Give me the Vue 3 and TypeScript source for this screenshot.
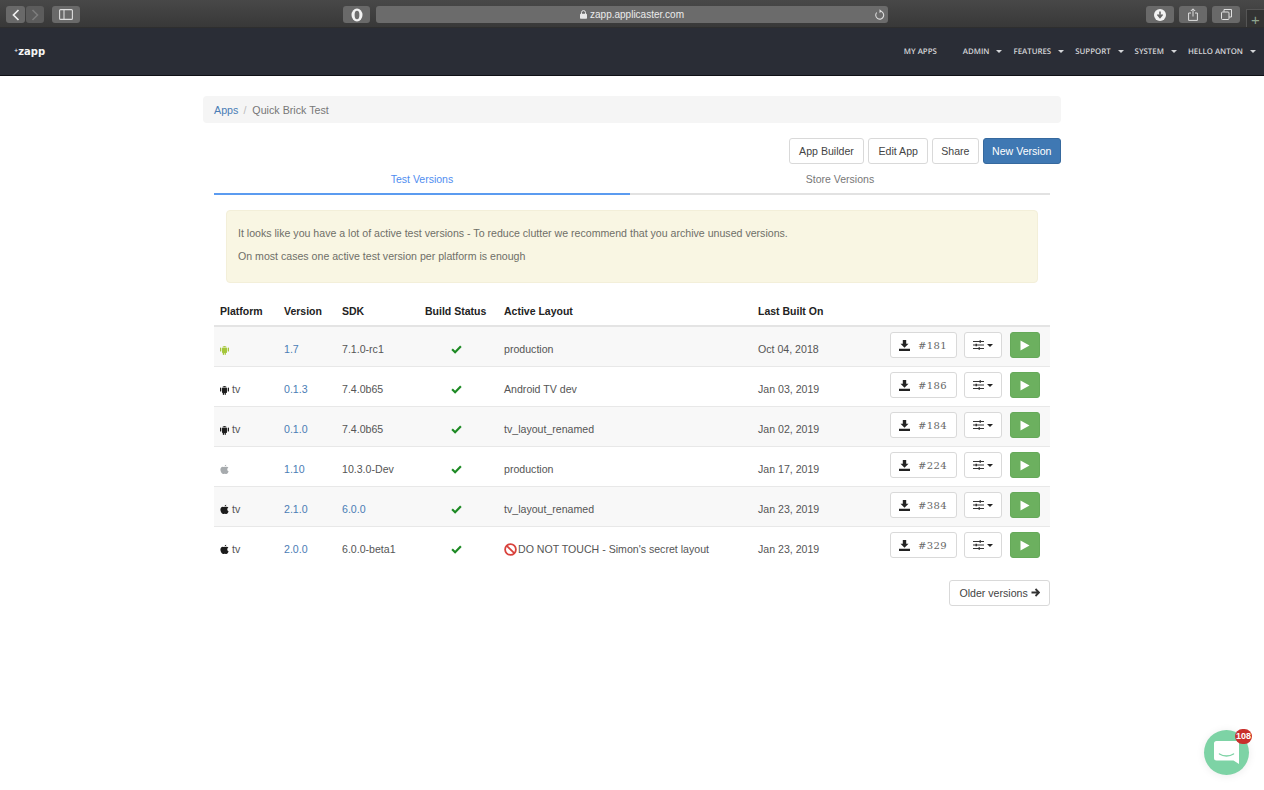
<script setup lang="ts">
interface VersionRow {
  platform: 'android' | 'apple';
  tv: boolean;
  muted?: string;
  version: string;
  sdk: string;
  sdkLink?: boolean;
  layout: string;
  forbidden?: boolean;
  built: string;
  build: string;
}

const navItems = ['ADMIN', 'FEATURES', 'SUPPORT', 'SYSTEM', 'HELLO ANTON'];

const rows: VersionRow[] = [
  { platform: 'android', tv: false, muted: '#a4c639', version: '1.7', sdk: '7.1.0-rc1', layout: 'production', built: 'Oct 04, 2018', build: '#181' },
  { platform: 'android', tv: true, version: '0.1.3', sdk: '7.4.0b65', layout: 'Android TV dev', built: 'Jan 03, 2019', build: '#186' },
  { platform: 'android', tv: true, version: '0.1.0', sdk: '7.4.0b65', layout: 'tv_layout_renamed', built: 'Jan 02, 2019', build: '#184' },
  { platform: 'apple', tv: false, muted: '#a7abae', version: '1.10', sdk: '10.3.0-Dev', layout: 'production', built: 'Jan 17, 2019', build: '#224' },
  { platform: 'apple', tv: true, version: '2.1.0', sdk: '6.0.0', sdkLink: true, layout: 'tv_layout_renamed', built: 'Jan 23, 2019', build: '#384' },
  { platform: 'apple', tv: true, version: '2.0.0', sdk: '6.0.0-beta1', layout: "DO NOT TOUCH - Simon's secret layout", forbidden: true, built: 'Jan 23, 2019', build: '#329' },
];
</script>

<template>
  <div class="page">
    <div class="safari">
      <div class="safari__group">
        <span class="sbtn sbtn--nav"><svg width="8" height="12" viewBox="0 0 8 12"><path d="M6.500 1 1.500 6l5 5" fill="none" stroke="#f0f0f0" stroke-width="1.700" /></svg></span>
        <span class="sbtn sbtn--nav sbtn--off"><svg width="8" height="12" viewBox="0 0 8 12"><path d="m1.500 1 5 5-5 5" fill="none" stroke="#7c7c7c" stroke-width="1.600" /></svg></span>
        <span class="sbtn sbtn--side"><svg width="14" height="11" viewBox="0 0 14 11"><rect x=".6" y=".6" width="12.800" height="9.800" rx="1" fill="none" stroke="#ddd" stroke-width="1.100" /><path d="M5 .6v9.800" stroke="#ddd" stroke-width="1.100" /></svg></span>
      </div>
      <div class="safari__center">
        <span class="sbtn sbtn--shield"><svg width="12" height="14" viewBox="0 0 12 14"><ellipse cx="6" cy="7" rx="5.500" ry="6.500" fill="#f2f2f2" /><ellipse cx="6" cy="7" rx="2.400" ry="4.200" fill="#6f6f6f" /></svg></span>
        <div class="urlbar">
          <span class="urlbar__text">
            <svg width="7" height="9" viewBox="0 0 7 9"><path d="M1.500 4V2.600a2 2 0 0 1 4 0V4" fill="none" stroke="#e8e8e8" /><rect y="3.800" width="7" height="5" rx=".8" fill="#e8e8e8" /></svg>
            zapp.applicaster.com
          </span>
          <svg class="urlbar__reload" width="11" height="12" viewBox="0 0 11 12"><path d="M6.500 2.200a4 4 0 1 1-3.800 1.300" fill="none" stroke="#ddd" stroke-width="1.100" /><path d="M5.500.3 8 2.200 5.500 4.100Z" fill="#ddd" /></svg>
        </div>
      </div>
      <div class="safari__group safari__group--right">
        <span class="sbtn sbtn--tool"><svg width="12" height="12" viewBox="0 0 12 12"><circle cx="6" cy="6" r="6" fill="#f2f2f2" /><path d="M6 2.500v4.500M3.500 5.500 6 8.500l2.500-3" fill="none" stroke="#666" stroke-width="1.600" /></svg></span>
        <span class="sbtn sbtn--tool"><svg width="10" height="13" viewBox="0 0 10 13"><path d="M3 5H.6v7.400h8.800V5H7M5 8.500V1M2.800 3 5 .8 7.200 3" fill="none" stroke="#e0e0e0" stroke-width="1" /></svg></span>
        <span class="sbtn sbtn--tool"><svg width="11" height="11" viewBox="0 0 11 11"><rect x=".5" y="3" width="7.500" height="7.500" rx="1" fill="none" stroke="#e0e0e0" /><path d="M3 2.800V.5h7.500V8H8.200" fill="none" stroke="#e0e0e0" /></svg></span>
        <span class="newtab">+</span>
      </div>
    </div>

    <nav class="navbar">
      <a class="logo"><span class="logo__mark">+</span>zapp</a>
      <div class="navbar__links">
        <a class="navlink navlink--first">MY APPS</a>
        <a v-for="item in navItems" :key="item" class="navlink">{{ item }}<span class="caret caret--nav"></span></a>
      </div>
    </nav>

    <main class="container">
      <div class="breadcrumb">
        <a class="link">Apps</a><span class="breadcrumb__sep">/</span><span>Quick Brick Test</span>
      </div>

      <div class="actions">
        <button class="btn">App Builder</button>
        <button class="btn">Edit App</button>
        <button class="btn btn--tight">Share</button>
        <button class="btn btn--primary">New Version</button>
      </div>

      <div class="content">
        <div class="tabs">
          <div class="tab tab--active">Test Versions</div>
          <div class="tab">Store Versions</div>
        </div>

        <div class="alert">
          <p>It looks like you have a lot of active test versions - To reduce clutter we recommend that you archive unused versions.</p>
          <p>On most cases one active test version per platform is enough</p>
        </div>

        <table class="versions">
          <colgroup>
            <col style="width: 64px" />
            <col style="width: 58px" />
            <col style="width: 83px" />
            <col style="width: 79px" />
            <col style="width: 254px" />
            <col style="width: 126px" />
            <col />
          </colgroup>
          <thead>
            <tr>
              <th>Platform</th>
              <th>Version</th>
              <th>SDK</th>
              <th>Build Status</th>
              <th>Active Layout</th>
              <th>Last Built On</th>
              <th></th>
            </tr>
          </thead>
          <tbody>
            <tr v-for="row in rows" :key="row.build">
              <td class="platform">
                <svg v-if="row.platform === 'android'" class="os" viewBox="0 0 12 12" :style="{ fill: row.muted || '#1c1c1c' }">
                  <path d="M3.400 3.900a2.700 2.500 0 0 1 5.200 0ZM3.300 4.400h5.400v4.700a.6.600 0 0 1-.6.600h-.6v1.600a.7.700 0 0 1-1.400 0V9.700h-.6v1.600a.7.700 0 0 1-1.400 0V9.700h-.2a.6.600 0 0 1-.6-.6ZM1.100 4.400a.7.700 0 0 1 1.400 0v3.200a.7.700 0 0 1-1.400 0ZM9.500 4.400a.7.700 0 0 1 1.400 0v3.200a.7.700 0 0 1-1.400 0Z" />
                </svg>
                <svg v-else class="os" viewBox="0 0 12 12" :style="{ fill: row.muted || '#1c1c1c' }">
                  <path d="M8.100 2.900c-.9 0-1.400.5-2 .5s-1.200-.5-2-.5C2.800 2.900 1.500 4 1.500 6.100c0 2.300 1.600 4.900 2.900 4.900.7 0 1-.5 1.800-.5s1 .5 1.800.5c1 0 2-1.500 2.500-3-1.900-.8-2-3.400-.2-4.300-.5-.6-1.300-.8-2.200-.8ZM7.900.9C7 1 6 1.900 6.100 2.800 7.100 2.800 8 1.900 7.900.9Z" />
                </svg>
                <span v-if="row.tv" class="platform__tv">tv</span>
              </td>
              <td><a class="link">{{ row.version }}</a></td>
              <td><a v-if="row.sdkLink" class="link">{{ row.sdk }}</a><template v-else>{{ row.sdk }}</template></td>
              <td class="status">
                <svg width="11" height="9" viewBox="0 0 11 9"><path d="M1.100 4.300 4.100 7.200 9.900 1.300" fill="none" stroke="#1d8a24" stroke-width="2.200" /></svg>
              </td>
              <td>
                <svg v-if="row.forbidden" class="forbidden" viewBox="0 0 13 13"><circle cx="6.500" cy="6.500" r="5.400" fill="none" stroke="#d9423c" stroke-width="1.800" /><path d="m2.800 2.800 7.400 7.400" stroke="#d9423c" stroke-width="1.800" /></svg>{{ row.layout }}
              </td>
              <td>{{ row.built }}</td>
              <td class="controls">
                <div class="controls__inner">
                  <button class="btn btn--build">
                    <svg width="11" height="11" viewBox="0 0 11 11"><path d="M3.800 0h3.400v3.800h2.300L5.500 7.800l-4-4h2.300ZM0 8.800h11V11H0Z" fill="#222" /></svg>
                    <span class="btn__num">{{ row.build }}</span>
                  </button>
                  <button class="btn btn--config">
                    <svg width="11" height="10" viewBox="0 0 11 10"><path d="M0 1.500h11M0 5h11M0 8.500h11" stroke="#333" /><path d="M6.500.3h1.500v2.400H6.500ZM2.500 3.800H4v2.400H2.500ZM5.500 7.300H7v2.400H5.500Z" fill="#333" /></svg>
                    <span class="caret"></span>
                  </button>
                  <button class="btn btn--play"><svg width="10" height="11" viewBox="0 0 10 11"><path d="M.5.500 9.500 5.500.5 10.500Z" fill="#fff" /></svg></button>
                </div>
              </td>
            </tr>
          </tbody>
        </table>

        <div class="older">
          <button class="btn">Older versions <svg width="9" height="9" viewBox="0 0 9 9"><path d="M4.500 1 8 4.500 4.500 8M7.500 4.500H.5" fill="none" stroke="#333" stroke-width="1.800" /></svg></button>
        </div>
      </div>
    </main>

    <div class="chat">
      <svg width="25" height="23" viewBox="0 0 25 23"><path d="M2.500 0h20A2.500 2.500 0 0 1 25 2.500V23l-5.500-3.500h-17A2.500 2.500 0 0 1 0 17v-14.500A2.500 2.500 0 0 1 2.500 0Z" fill="#fff" /><path d="M5.500 13c4 2.700 10 2.700 14 0" fill="none" stroke="#7dd3a5" stroke-width="1.500" stroke-linecap="round" /></svg>
      <span class="chat__badge">108</span>
    </div>
  </div>
</template>

<style>
html, body {
  margin: 0;
  background: #fff;
}
</style>

<style scoped>
.page {
  position: relative;
  height: 790px;
  overflow: hidden;
  font-family: "Liberation Sans", Arial, sans-serif;
  font-size: 11px;
  color: #555;
}

.safari {
  height: 28px;
  box-sizing: border-box;
  padding: 6px 0 0 6px;
  background: linear-gradient(#484848, #383838);
  border-bottom: 1px solid #2e2e2e;
  display: flex;
  align-items: flex-start;
  justify-content: space-between;
}

.safari__group {
  display: flex;
  gap: 1px;
}

.safari__group--right {
  gap: 5px;
}

.safari__center {
  position: absolute;
  left: 343px;
  top: 6px;
  display: flex;
  gap: 6px;
}

.sbtn {
  height: 17px;
  border-radius: 3px;
  background: #696969;
  display: flex;
  align-items: center;
  justify-content: center;
}

.sbtn--nav { width: 19px; }
.sbtn--off { width: 18px; background: #5c5c5c; }
.sbtn--side { width: 28px; margin-left: 7px; }
.sbtn--shield { width: 27px; }
.sbtn--tool { width: 28px; }

.urlbar {
  width: 512px;
  height: 17px;
  border-radius: 3px;
  background: #6b6b6b;
  position: relative;
  display: flex;
  align-items: center;
  justify-content: center;
  color: #ececec;
  font-size: 10px;
}

.urlbar__text {
  display: flex;
  align-items: center;
  gap: 3px;
}

.urlbar__reload {
  position: absolute;
  right: 3px;
  top: 3px;
}

.newtab {
  width: 18px;
  height: 18px;
  margin-top: 3px;
  margin-left: 1px;
  box-sizing: border-box;
  background: #333;
  border-left: 1px solid #555;
  border-top: 1px solid #555;
  color: #8fa58f;
  font-size: 15px;
  line-height: 20px;
  text-align: center;
}

.navbar {
  height: 47px;
  background: #2a2d36;
  border-bottom: 1px solid #0f1016;
  display: flex;
  align-items: center;
  justify-content: space-between;
  padding: 0 8px 0 14px;
}

.logo {
  color: #f5f5f5;
  font-family: "DejaVu Sans", sans-serif;
  font-size: 10px;
  font-weight: 700;
  display: flex;
  align-items: center;
}

.logo__mark {
  font-size: 5px;
  margin-top: -4px;
}

.navbar__links {
  display: flex;
  align-items: center;
  gap: 11px;
}

.navlink {
  color: #d4d5d8;
  font-family: "Open Sans", "Liberation Sans", sans-serif;
  font-size: 7.850px;
  font-weight: 600;
  text-rendering: geometricPrecision;
  white-space: nowrap;
  display: flex;
  align-items: center;
}

.navlink--first {
  margin-right: 15px;
}

.caret {
  display: inline-block;
  width: 0;
  height: 0;
  margin-left: 3px;
  border-top: 3px solid #222;
  border-left: 3px solid transparent;
  border-right: 3px solid transparent;
}

.caret--nav {
  margin-left: 7px;
  border-top-color: #d4d5d8;
}

.container {
  width: 858px;
  margin: 20px 0 0 203px;
}

.breadcrumb {
  height: 27px;
  box-sizing: border-box;
  padding: 0 11px;
  background: #f5f5f5;
  border-radius: 4px;
  display: flex;
  align-items: center;
  color: #777;
  font-size: 10.700px;
}

.breadcrumb__sep {
  color: #bbb;
  margin: 0 6px 0 5px;
}

.link {
  color: #4a7db5;
}

.actions {
  display: flex;
  justify-content: flex-end;
  gap: 4px;
  margin-top: 15px;
}

.btn {
  height: 26px;
  box-sizing: border-box;
  padding: 0 9.300px;
  background: #fff;
  border: 1px solid #d9d9d9;
  border-radius: 3px;
  color: #444;
  font-family: inherit;
  font-size: 10.600px;
  white-space: nowrap;
}

.btn--tight {
  padding: 0 8px;
}

.btn--primary {
  padding: 0 8.500px;
  background: #3f78b3;
  border-color: #36699e;
  color: #fff;
}

.content {
  width: 836px;
  margin-left: 11px;
}

.tabs {
  display: flex;
  height: 30px;
  margin-top: 1px;
}

.tab {
  flex: 1;
  text-align: center;
  color: #777;
  font-size: 10.500px;
  line-height: 28px;
  border-bottom: 2px solid #e2e2e2;
  box-sizing: border-box;
}

.tab--active {
  flex: 0 0 416px;
  color: #4f8df0;
  border-bottom-color: #5b9bf0;
}

.alert {
  width: 812px;
  height: 73px;
  box-sizing: border-box;
  margin: 15px 0 15px 12px;
  padding: 16px 11px 0;
  background: #f9f6e3;
  border: 1px solid #f3efd9;
  border-radius: 4px;
  color: #6f6f68;
  font-size: 10.600px;
}

.alert p {
  margin: 0 0 10px;
  line-height: 13px;
}

.versions {
  width: 836px;
  table-layout: fixed;
  border-collapse: collapse;
  color: #555;
  font-size: 10.600px;
}

.versions th {
  height: 28px;
  box-sizing: border-box;
  padding: 0 6px 2px;
  text-align: left;
  color: #222;
  font-size: 10.500px;
  font-weight: 700;
  border-bottom: 2px solid #e4e4e4;
  white-space: nowrap;
}

.versions td {
  height: 40px;
  padding: 6px 6px 0;
  box-sizing: border-box;
  border-bottom: 1px solid #e8e8e8;
  white-space: nowrap;
}

.versions tbody tr:last-child td {
  border-bottom: none;
}

.versions tbody tr:nth-child(odd) {
  background: #f8f8f8;
}

.os {
  width: 11px;
  height: 11px;
  margin-left: -1px;
  vertical-align: -2px;
}

.platform__tv {
  margin-left: 2px;
}

.versions td.status {
  padding: 8px 6px 0 32px;
}

.forbidden {
  width: 13px;
  height: 13px;
  vertical-align: -3px;
  margin-right: 1px;
}

.versions td.controls {
  padding: 0 10px 0 0;
}

.controls__inner {
  display: flex;
  justify-content: flex-end;
  gap: 7px;
  margin-top: -2px;
}

.btn--build {
  width: 67px;
  display: flex;
  align-items: center;
  justify-content: space-between;
  padding: 0 9px 0 8px;
}

.btn__num {
  font-family: "DejaVu Serif", "Liberation Serif", serif;
  font-size: 10px;
  color: #666;
  letter-spacing: 0.4px;
}

.btn--config {
  width: 38px;
  margin-right: 1px;
  display: flex;
  align-items: center;
  justify-content: center;
  padding: 0;
}

.btn--play {
  width: 30px;
  padding: 0;
  display: flex;
  align-items: center;
  justify-content: center;
  background: #6cb05f;
  border-color: #65a959;
}

.older {
  display: flex;
  justify-content: flex-end;
  margin-top: 14px;
}

.chat {
  position: absolute;
  left: 1204px;
  top: 730px;
  width: 45px;
  height: 45px;
  border-radius: 50%;
  background: #7dd3a5;
  box-shadow: 0 1px 8px rgba(0, 0, 0, 0.08);
  display: flex;
  align-items: center;
  justify-content: center;
}

.chat__badge {
  position: absolute;
  left: 31px;
  top: -1px;
  width: 17px;
  height: 15px;
  border-radius: 8px;
  background: #c9302c;
  color: #fff;
  font-size: 9px;
  font-weight: 700;
  line-height: 15px;
  text-align: center;
}
</style>
